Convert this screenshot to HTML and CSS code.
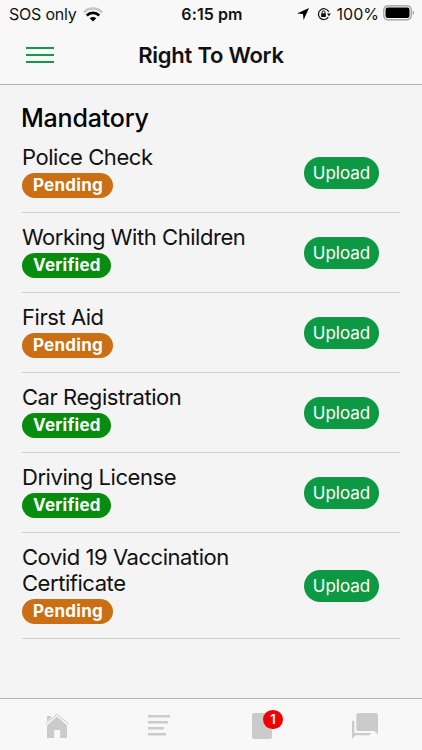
FILE: index.html
```html
<!DOCTYPE html>
<html lang="en">
<head>
    <meta charset="UTF-8">
    <meta name="viewport" content="width=device-width, initial-scale=1.0">
    <title>Right To Work</title>
    <link rel="stylesheet" href="styles.css">
</head>
<body>
    <div class="app">
        <header class="header">
            <div class="status-bar">
                <div class="status-left">
                    <span class="carrier">SOS only</span>
                    <svg class="wifi" width="20" height="15" viewBox="0 0 20 15">
                        <path d="M1 5.300C6 .2 14 .2 19 5.300" fill="none" stroke="#c6c6c6" stroke-width="2.400"/>
                        <path d="M3.700 8.500c3.600-3.500 9-3.500 12.600 0" fill="none" stroke="#000" stroke-width="2.700"/>
                        <path d="M6.700 11.300c1.900-1.700 4.700-1.700 6.600 0L10 14.600z" fill="#000"/>
                    </svg>
                </div>
                <span class="time">6:15 pm</span>
                <div class="status-right">
                    <svg class="location" width="12" height="12" viewBox="0 0 12 12">
                        <path d="M12 0L6.600 12 6 6 0 5.400z" fill="#000"/>
                    </svg>
                    <svg class="lock" width="14" height="14" viewBox="0 0 14 14">
                        <path d="M11.300 10.200A5.400 5.400 0 1 1 11.800 5" fill="none" stroke="#111" stroke-width="1.200"/>
                        <path d="M9.900 6.500h4l-2 2.700z" fill="#111"/>
                        <rect x="4.100" y="6.300" width="4.800" height="3.700" rx=".5" fill="#111"/>
                        <path d="M5.100 6.500V5.200a1.400 1.400 0 0 1 2.800 0v1.300" fill="none" stroke="#111"/>
                    </svg>
                    <span class="percent">100%</span>
                    <svg class="battery" width="32" height="16" viewBox="0 0 32 16">
                        <rect x=".8" y=".8" width="27.400" height="14" rx="4" fill="none" stroke="#999" stroke-width="1.200"/>
                        <rect x="2.500" y="2.500" width="24" height="10.600" rx="2.300" fill="#000"/>
                        <path d="M29.700 5.500c1.700.8 1.700 3.800 0 4.600z" fill="#999"/>
                    </svg>
                </div>
            </div>
            <div class="nav-bar">
                <div class="menu">
                    <span></span>
                    <span></span>
                    <span></span>
                </div>
                <h1>Right To Work</h1>
            </div>
        </header>

        <main class="content">
            <h2>Mandatory</h2>
            <ul class="doc-list">
                <li>
                    <div class="doc-info">
                        <div class="doc-name">Police Check</div>
                        <span class="badge pending">Pending</span>
                    </div>
                    <button class="upload">Upload</button>
                </li>
                <li>
                    <div class="doc-info">
                        <div class="doc-name">Working With Children</div>
                        <span class="badge verified">Verified</span>
                    </div>
                    <button class="upload">Upload</button>
                </li>
                <li>
                    <div class="doc-info">
                        <div class="doc-name">First Aid</div>
                        <span class="badge pending">Pending</span>
                    </div>
                    <button class="upload">Upload</button>
                </li>
                <li>
                    <div class="doc-info">
                        <div class="doc-name">Car Registration</div>
                        <span class="badge verified">Verified</span>
                    </div>
                    <button class="upload">Upload</button>
                </li>
                <li>
                    <div class="doc-info">
                        <div class="doc-name">Driving License</div>
                        <span class="badge verified">Verified</span>
                    </div>
                    <button class="upload">Upload</button>
                </li>
                <li>
                    <div class="doc-info">
                        <div class="doc-name">Covid 19 Vaccination Certificate</div>
                        <span class="badge pending">Pending</span>
                    </div>
                    <button class="upload">Upload</button>
                </li>
            </ul>
        </main>

        <nav class="tab-bar">
            <a class="tab">
                <svg width="26" height="26" viewBox="0 0 26 26">
                    <path d="M3 12.300L13 3.400l10 8.900V25h-6.800v-8h-6v8H3z"/>
                    <path d="M3 9V3h4v2.600z"/>
                    <path d="M1.500 11.200L13 1.300l11.500 9.900" fill="none" stroke="#f8f8f8" stroke-width="2.400"/>
                    <path d="M1.500 10.700L13 1.300l11.500 9.400" fill="none" stroke="#cbcbcb"/>
                </svg>
            </a>
            <a class="tab">
                <svg width="26" height="26" viewBox="0 0 26 26">
                    <path d="M1 2h22v2.500H1zM1 8h20v2.500H1zM1 14h16v2.500H1zM1 20h18v2.500H1z"/>
                </svg>
            </a>
            <a class="tab">
                <svg width="26" height="26" viewBox="0 0 26 26">
                    <rect x="3" width="20" height="26" rx="2"/>
                </svg>
                <span class="count">1</span>
            </a>
            <a class="tab">
                <svg width="26" height="26" viewBox="0 0 26 26">
                    <path d="M6.500 0h17.300Q26 0 26 2.200V21.500L22.300 18H6.500Q4.300 18 4.300 15.800V2.200Q4.300 0 6.500 0z"/>
                    <path d="M0 7.700h2.400V20h16.400q0 2.200-2.200 2.200H3.700L0 25.800z"/>
                </svg>
            </a>
        </nav>
    </div>
</body>
</html>
```
FILE: styles.css
```css
* {
    box-sizing: border-box;
}

body {
    margin: 0;
    font-family: Inter, "Liberation Sans", sans-serif;
    background-color: #f4f4f4;
    color: #111;
}

.app {
    display: flex;
    flex-direction: column;
    height: 750px;
}

.header {
    height: 85px;
    background-color: #f8f8f8;
    border-bottom: 1px solid #b2b2b2;
}

.status-bar {
    display: grid;
    grid-template-columns: 1fr auto 1fr;
    align-items: center;
    height: 28px;
    padding: 0 7px 0 9px;
    font-size: 16px;
}

.status-left,
.status-right {
    display: flex;
    align-items: center;
}

.status-right {
    justify-content: flex-end;
}

.carrier {
    letter-spacing: -0.2px;
}

.wifi {
    margin-left: 6px;
}

.time {
    font-weight: 600;
    letter-spacing: 0.1px;
}

.lock {
    margin: 0 6px 0 8px;
}

.battery {
    margin: -2px 0 0 4px;
}

.nav-bar {
    display: grid;
    grid-template-columns: 80px 1fr 80px;
    align-items: center;
    height: 54px;
}

.menu {
    display: flex;
    flex-direction: column;
    gap: 5px;
    width: 28px;
    margin-left: 26px;
}

.menu span {
    height: 2px;
    background-color: #16984a;
}

h1 {
    margin: 0;
    font-size: 22px;
    font-weight: 600;
    letter-spacing: -0.25px;
    text-align: center;
}

.content {
    flex: 1;
    padding: 18px 22px 0;
}

h2 {
    margin: 0 0 0 -1px;
    font-size: 25px;
    font-weight: 500;
    line-height: 30px;
    letter-spacing: -0.2px;
    color: #000;
}

.doc-list {
    list-style-type: none;
    margin: 0;
    padding: 0;
}

.doc-list li {
    display: flex;
    justify-content: space-between;
    align-items: center;
    padding: 11px 21px 14px 0;
    border-bottom: 1px solid #d0d0d0;
}

.doc-info {
    width: 250px;
}

.doc-name {
    font-size: 22px;
    line-height: 26px;
    letter-spacing: -0.45px;
}

.badge {
    display: block;
    width: fit-content;
    height: 25px;
    padding: 0 10px 0 11px;
    margin-top: 3px;
    border-radius: 13px;
    font-size: 17px;
    font-weight: 700;
    line-height: 25px;
    letter-spacing: 0.25px;
    color: #fff;
}

.pending {
    background-color: #ca6f13;
}

.verified {
    background-color: #078c0d;
}

.upload {
    width: 75px;
    height: 32px;
    margin-top: 4px;
    padding: 0;
    border: none;
    border-radius: 16px;
    background-color: #0d9944;
    color: #fff;
    font-family: inherit;
    font-size: 17px;
}

.tab-bar {
    display: flex;
    height: 52px;
    padding: 0 6px;
    background-color: #f8f8f8;
    border-top: 1px solid #b2b2b2;
}

.tab {
    position: relative;
    flex: 1;
    display: flex;
    justify-content: center;
    padding-top: 14px;
}

.tab svg {
    fill: #cbcbcb;
}

.count {
    position: absolute;
    top: 11px;
    left: 52px;
    width: 20px;
    height: 19px;
    border-radius: 10px;
    background-color: #ee0202;
    color: #fff;
    font-size: 13px;
    font-weight: 600;
    line-height: 19px;
    text-align: center;
}
```
